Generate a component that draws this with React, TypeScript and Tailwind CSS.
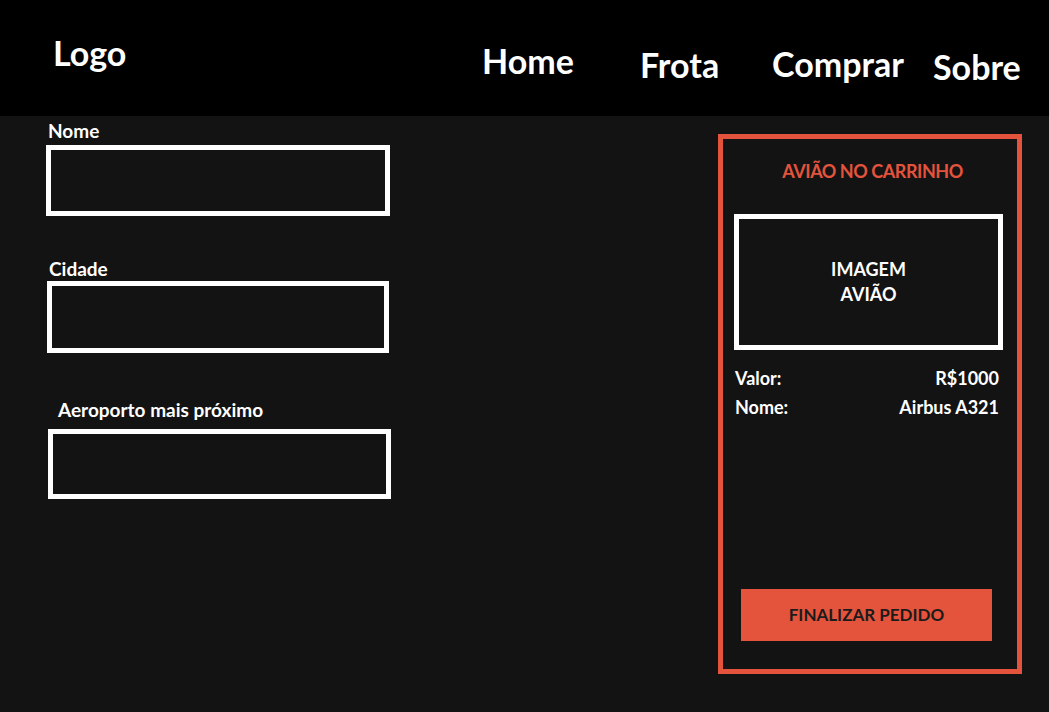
import React from "react";

type Field = {
  label: string;
  labelClass: string;
  boxClass: string;
};

const fields: Field[] = [
  { label: "Nome", labelClass: "mt-[5px] ml-[2px]", boxClass: "mt-[5px] w-[344px] h-[71px]" },
  { label: "Cidade", labelClass: "mt-[43px] ml-[3px]", boxClass: "mt-[3px] ml-[1px] w-[342px] h-[72px]" },
  { label: "Aeroporto mais próximo", labelClass: "mt-[47px] ml-[12px]", boxClass: "mt-[10px] ml-[2px] w-[343px] h-[70px]" },
];

const Header = () => (
  <header className="h-[116px] bg-black flex items-start pl-[53px] text-white font-bold text-[34px] leading-none">
    <div className="w-[429px] shrink-0 mt-[36px]">Logo</div>
    <nav className="flex items-start shrink-0">
      <a className="w-[158px] mt-[44px]">Home</a>
      <a className="w-[132px] mt-[48px]">Frota</a>
      <a className="w-[161px] mt-[47px]">Comprar</a>
      <a className="mt-[50px]">Sobre</a>
    </nav>
  </header>
);

const CartPanel = () => (
  <aside className="mt-[18px] w-[304px] h-[540px] shrink-0 border-[5px] border-[#e4533c] flex flex-col pl-[11px] pr-[14px]">
    <h2 className="mt-[23px] ml-[8px] text-center text-[18px] leading-none font-bold text-[#e4533c] tracking-tight">
      AVIÃO NO CARRINHO
    </h2>
    <div className="mt-[34px] h-[136px] border-[5px] border-white flex items-center justify-center text-center text-white font-bold text-[18px] leading-[25px]">
      IMAGEM
      <br />
      AVIÃO
    </div>
    <div className="mt-[14px] text-white font-bold text-[18px] leading-[29px] pl-[1px] pr-[4px]">
      <div className="flex justify-between">
        <span>Valor:</span>
        <span>R$1000</span>
      </div>
      <div className="flex justify-between">
        <span>Nome:</span>
        <span>Airbus A321</span>
      </div>
    </div>
    <button className="mt-auto mb-[28px] ml-[7px] w-[251px] h-[52px] bg-[#e4533c] text-[#1b1b1b] font-bold text-[17px] flex items-center justify-center">
      FINALIZAR PEDIDO
    </button>
  </aside>
);

export default function App() {
  return (
    <div className="w-[1049px] h-[712px] bg-[#131313] overflow-hidden" style={{ fontFamily: "Lato, 'Open Sans', sans-serif" }}>
      <Header />
      <main className="flex justify-between pl-[46px] pr-[27px]">
        <form className="flex flex-col text-white font-bold text-[19px] leading-none">
          {fields.map((f) => (
            <React.Fragment key={f.label}>
              <label className={f.labelClass}>{f.label}</label>
              <div className={`${f.boxClass} border-[5px] border-white`} />
            </React.Fragment>
          ))}
        </form>
        <CartPanel />
      </main>
    </div>
  );
}
